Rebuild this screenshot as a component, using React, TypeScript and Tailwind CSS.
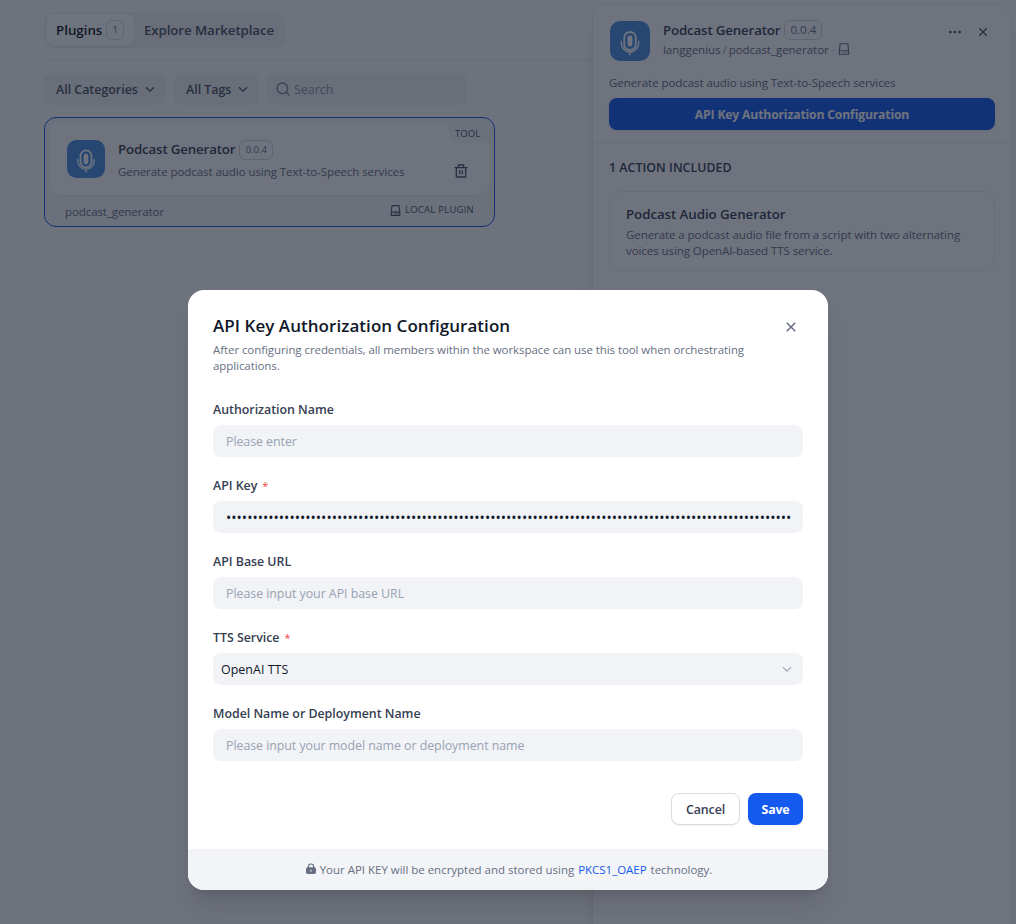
import type { ReactNode } from 'react';
import { RiCloseLine, RiDeleteBinLine, RiHardDrive3Line, RiMoreFill, RiSearchLine } from 'react-icons/ri';

function MicLogo({ className }: { className: string }) {
  return (
    <svg viewBox="0 0 40 40" className={className}>
      <rect width="40" height="40" rx="10" fill="#4a90e2" />
      <g fill="none" stroke="#fff" strokeLinecap="round">
        <rect x="14.2" y="11" width="11.6" height="18" rx="5.8" strokeWidth="1.8" />
        <path d="M11.3 20.5v1.2a8.7 9.3 0 0 0 17.4 0v-1.2" strokeWidth="1.4" />
        <path d="M20 31.5v2.2" strokeWidth="1.5" />
      </g>
      <rect x="17.6" y="14.6" width="4.8" height="11" rx="2.4" fill="#fff" />
    </svg>
  );
}

function Chevron({ className = '', weight = 1.25 }: { className?: string; weight?: number }) {
  return (
    <svg viewBox="0 0 16 16" className={`size-4 ${className}`} fill="none" stroke="currentColor" strokeWidth={weight}>
      <path d="m4 6.2 4 4 4-4" />
    </svg>
  );
}

function Version({ className = '' }: { className?: string }) {
  return (
    <span className={`flex h-5 items-center justify-center rounded-md border border-[#10182829] font-medium text-[#676f83] ${className}`}>
      0.0.4
    </span>
  );
}

function Field({ label, required, children }: { label: string; required?: boolean; children: ReactNode }) {
  return (
    <div className="flex h-[76px] flex-col">
      <div className="flex h-8 items-center pt-0.5 text-[12.4px] font-semibold tracking-[-0.02px] text-[#354052]">
        <span>{label}</span>
        {required && <span className="ml-[5px] text-[11px] font-normal text-[#f04438]">*</span>}
      </div>
      {children}
    </div>
  );
}

function Box({ children, className = '' }: { children: ReactNode; className?: string }) {
  return (
    <div className={`flex h-8 shrink-0 items-center overflow-hidden rounded-lg bg-[#f1f3f7] pt-0.5 text-[12.4px] whitespace-nowrap ${className}`}>
      {children}
    </div>
  );
}

function PluginList() {
  return (
    <main className="h-full w-[592px] pt-3">
      <div className="ml-11 flex h-9 w-[241px] items-center rounded-[10px] bg-[#eef0f3] p-0.5 text-[13.3px] font-semibold">
        <div className="flex h-8 w-[88px] items-center rounded-lg bg-[#fdfdfe] pl-2.5 text-[#101828] shadow-xs">
          <span className="pt-0.5">Plugins</span>
          <span className="ml-1 flex h-5 w-[18px] items-center justify-center rounded-md border border-[#10182829] text-[9.5px] font-medium text-[#676f83]">1</span>
        </div>
        <span className="ml-2.5 pt-0.5 tracking-[-0.1px] text-[#495464]">Explore Marketplace</span>
      </div>
      <div className="mt-3 ml-11 h-px bg-[#eceef2]" />
      <div className="mt-3 ml-11 flex h-8 gap-2 text-[12.4px] font-semibold text-[#495464]">
        <div className="flex w-[122px] items-center justify-between rounded-lg bg-[#eef0f3] pr-2 pl-3"><span className="pt-0.5">All Categories</span><Chevron /></div>
        <div className="flex w-[85px] items-center justify-between rounded-lg bg-[#eef0f3] pr-2 pl-3"><span className="pt-0.5">All Tags</span><Chevron /></div>
        <div className="flex w-[200px] items-center rounded-lg bg-[#eef0f3] pl-2 font-normal text-[#8c95a5]"><RiSearchLine className="mr-[3px] size-4 text-[#7b8496]" /><span className="pt-0.5">Search</span></div>
      </div>
      <div className="mt-3 ml-11 h-[110px] w-[451px] rounded-xl border-[1.5px] border-[#155aef] bg-[#f4f5f8] p-1">
        <div className="relative flex h-[73px] w-[440px] overflow-hidden rounded-xl bg-[#fcfcfd] pt-[17px] pl-[18px] shadow-xs">
          <MicLogo className="mt-px size-[38px]" />
          <div className="ml-[13px]">
            <div className="flex h-5 items-center gap-1 pt-0.5 text-[13.3px] font-semibold tracking-[-0.16px] text-[#354052]"><span>Podcast Generator</span><Version className="w-[34px] shrink-0 text-[9.5px] tracking-normal" /></div>
            <div className="mt-[5px] text-[11.5px] leading-4 tracking-[-0.055px] text-[#676f83]">Generate podcast audio using Text-to-Speech services</div>
          </div>
          <RiDeleteBinLine className="absolute top-[41px] left-[404px] size-4 text-[#495464]" />
          <div className="absolute top-0 right-0 flex h-5 items-center">
            <svg width="10" height="20" viewBox="0 0 10 20"><path d="M0 0h10v20C5 20 7 13 0 0Z" fill="#f4f5f8" /></svg>
            <span className="flex h-5 w-[34px] items-center bg-[#f4f5f8] pt-1 text-[9.5px] font-medium tracking-[0.1px] text-[#495464]">TOOL</span>
          </div>
        </div>
        <div className="mt-2 flex h-4 items-center justify-between pr-4 pl-4 text-[11.5px] text-[#676f83]">
          <span className="pt-0.5 tracking-[-0.09px]">podcast_generator</span>
          <span className="flex items-center gap-[3px] pb-0.5 text-[9.5px] font-medium tracking-[0.24px] text-[#495464]"><RiHardDrive3Line className="size-[13px]" /><span className="pt-px">LOCAL PLUGIN</span></span>
        </div>
      </div>
    </main>
  );
}

function Drawer() {
  return (
    <aside className="absolute top-[3px] left-[592px] h-[940px] w-[420px] rounded-2xl border border-[#e9ebf0] bg-[#fdfdfe] shadow-xl">
      <div className="h-[139px] border-b border-[#eceef2] px-4 pt-[17px]">
        <div className="flex h-10">
          <MicLogo className="ml-px size-10" />
          <div className="ml-[13px]">
            <div className="flex h-[19px] items-center gap-1 text-[13.3px] font-semibold tracking-[-0.16px] text-[#354052]"><span>Podcast Generator</span><Version className="mb-0.5 w-[38px] shrink-0 text-[11.5px] tracking-normal" /></div>
            <div className="mt-0.5 flex h-4 items-center text-[11.5px] tracking-[-0.03px] text-[#676f83]">
              <span>langgenius</span><span className="mx-0.5 text-[#98a2b2]">/</span><span>podcast_generator</span><span className="mr-0.5 ml-[3px] text-[#98a2b2]">·</span><RiHardDrive3Line className="mb-0.5 size-3.5" />
            </div>
          </div>
          <div className="mt-[1px] ml-auto flex h-5 items-center gap-3 pr-1 text-[#495464]"><RiMoreFill className="size-4" /><RiCloseLine className="size-4" /></div>
        </div>
        <div className="mt-[14px] text-[11.5px] leading-4 tracking-[-0.055px] text-[#676f83]">Generate podcast audio using Text-to-Speech services</div>
        <div className="mt-[7px] flex h-8 items-center justify-center rounded-lg bg-[#155aef] pt-0.5 text-[12.2px] font-bold tracking-[-0.17px] text-[#fcfcfd] shadow-sm">API Key Authorization Configuration</div>
      </div>
      <div className="px-4 pt-[17px]">
        <div className="text-[12.4px] leading-4 font-semibold tracking-[0.03px] text-[#354052]">1 ACTION INCLUDED</div>
        <div className="mt-[15px] h-20 rounded-xl border-[1.5px] border-[#eceef2] px-4 pt-3">
          <div className="text-[13.3px] leading-5 font-semibold tracking-[-0.06px] text-[#354052]">Podcast Audio Generator</div>
          <div className="mt-[3px] text-[11.5px] leading-4 tracking-[-0.07px] whitespace-nowrap text-[#676f83]">Generate a podcast audio file from a script with two alternating<br />voices using OpenAI-based TTS service.</div>
        </div>
      </div>
    </aside>
  );
}

function Dialog() {
  return (
    <section className="relative flex h-[600px] w-[640px] flex-col overflow-hidden rounded-2xl bg-white pt-6 shadow-xl">
      <div className="px-[25px]">
        <div className="flex h-6 items-center justify-between text-[17px] font-semibold tracking-[0.05px] text-[#101828]">
          <span>API Key Authorization Configuration</span>
          <RiCloseLine className="mt-px mr-[3px] size-[18px] text-[#676f83]" />
        </div>
        <p className="mt-1 text-[11.5px] leading-4 tracking-[-0.076px] text-[#676f83]">After configuring credentials, all members within the workspace can use this tool when orchestrating<br />applications.</p>
        <div className="mt-[19px]">
          <Field label="Authorization Name"><Box className="px-[13px] tracking-[-0.06px] text-[#98a2b2]">Please enter</Box></Field>
          <Field label="API Key" required><Box className="px-[13px] text-[#101828]"><span className="pb-0.5 text-[14px] tracking-[0.02px]">{'•'.repeat(107)}</span></Box></Field>
          <Field label="API Base URL"><Box className="px-[13px] tracking-[-0.04px] text-[#98a2b2]">Please input your API base URL</Box></Field>
          <Field label="TTS Service" required>
            <Box className="justify-between pr-2 pl-2 tracking-[0.06px] text-[#101828]"><span>OpenAI TTS</span><Chevron weight={1.1} className="mb-0.5 text-[#98a2b2]" /></Box>
          </Field>
          <Field label="Model Name or Deployment Name"><Box className="px-[13px] tracking-[-0.05px] text-[#98a2b2]">Please input your model name or deployment name</Box></Field>
        </div>
        <div className="mt-5 flex justify-end gap-2 text-[12.4px]">
          <button className="flex h-8 w-[69px] items-center justify-center rounded-lg border border-[#d9dce3] bg-white pt-0.5 font-semibold tracking-[-0.1px] text-[#354052] shadow-xs">Cancel</button>
          <button className="flex h-8 w-[55px] items-center justify-center rounded-lg bg-[#155aef] pt-0.5 font-bold tracking-[-0.2px] text-white shadow-xs">Save</button>
        </div>
      </div>
      <footer className="mt-auto flex h-[41px] items-center justify-center bg-[#f2f4f7] pl-0.5 text-[11.5px] tracking-[-0.02px] text-[#676f83]">
        <svg width="10" height="12" viewBox="0 0 10 12" className="mr-1 mb-0.5"><path d="M2.4 5V3.6a2.6 2.6 0 0 1 5.2 0V5" fill="none" stroke="currentColor" strokeWidth="1.2" /><rect y="4.2" width="10" height="6.8" rx="1.8" fill="currentColor" /><rect x="4.5" y="6.8" width="1" height="1.8" fill="#fff" /></svg>
        <span>Your API KEY will be encrypted and stored using</span><span className="mx-1 text-[#155aef]">PKCS1_OAEP</span><span>technology.</span>
      </footer>
    </section>
  );
}

export default function App() {
  return (
    <div className="relative h-[924px] w-[1016px] overflow-hidden bg-[#fafbfc] font-['Open_Sans','Noto_Sans',sans-serif]">
      <PluginList />
      <Drawer />
      <div className="absolute inset-0 flex bg-[#10182899] pt-[290px] pl-[188px]"><Dialog /></div>
    </div>
  );
}
